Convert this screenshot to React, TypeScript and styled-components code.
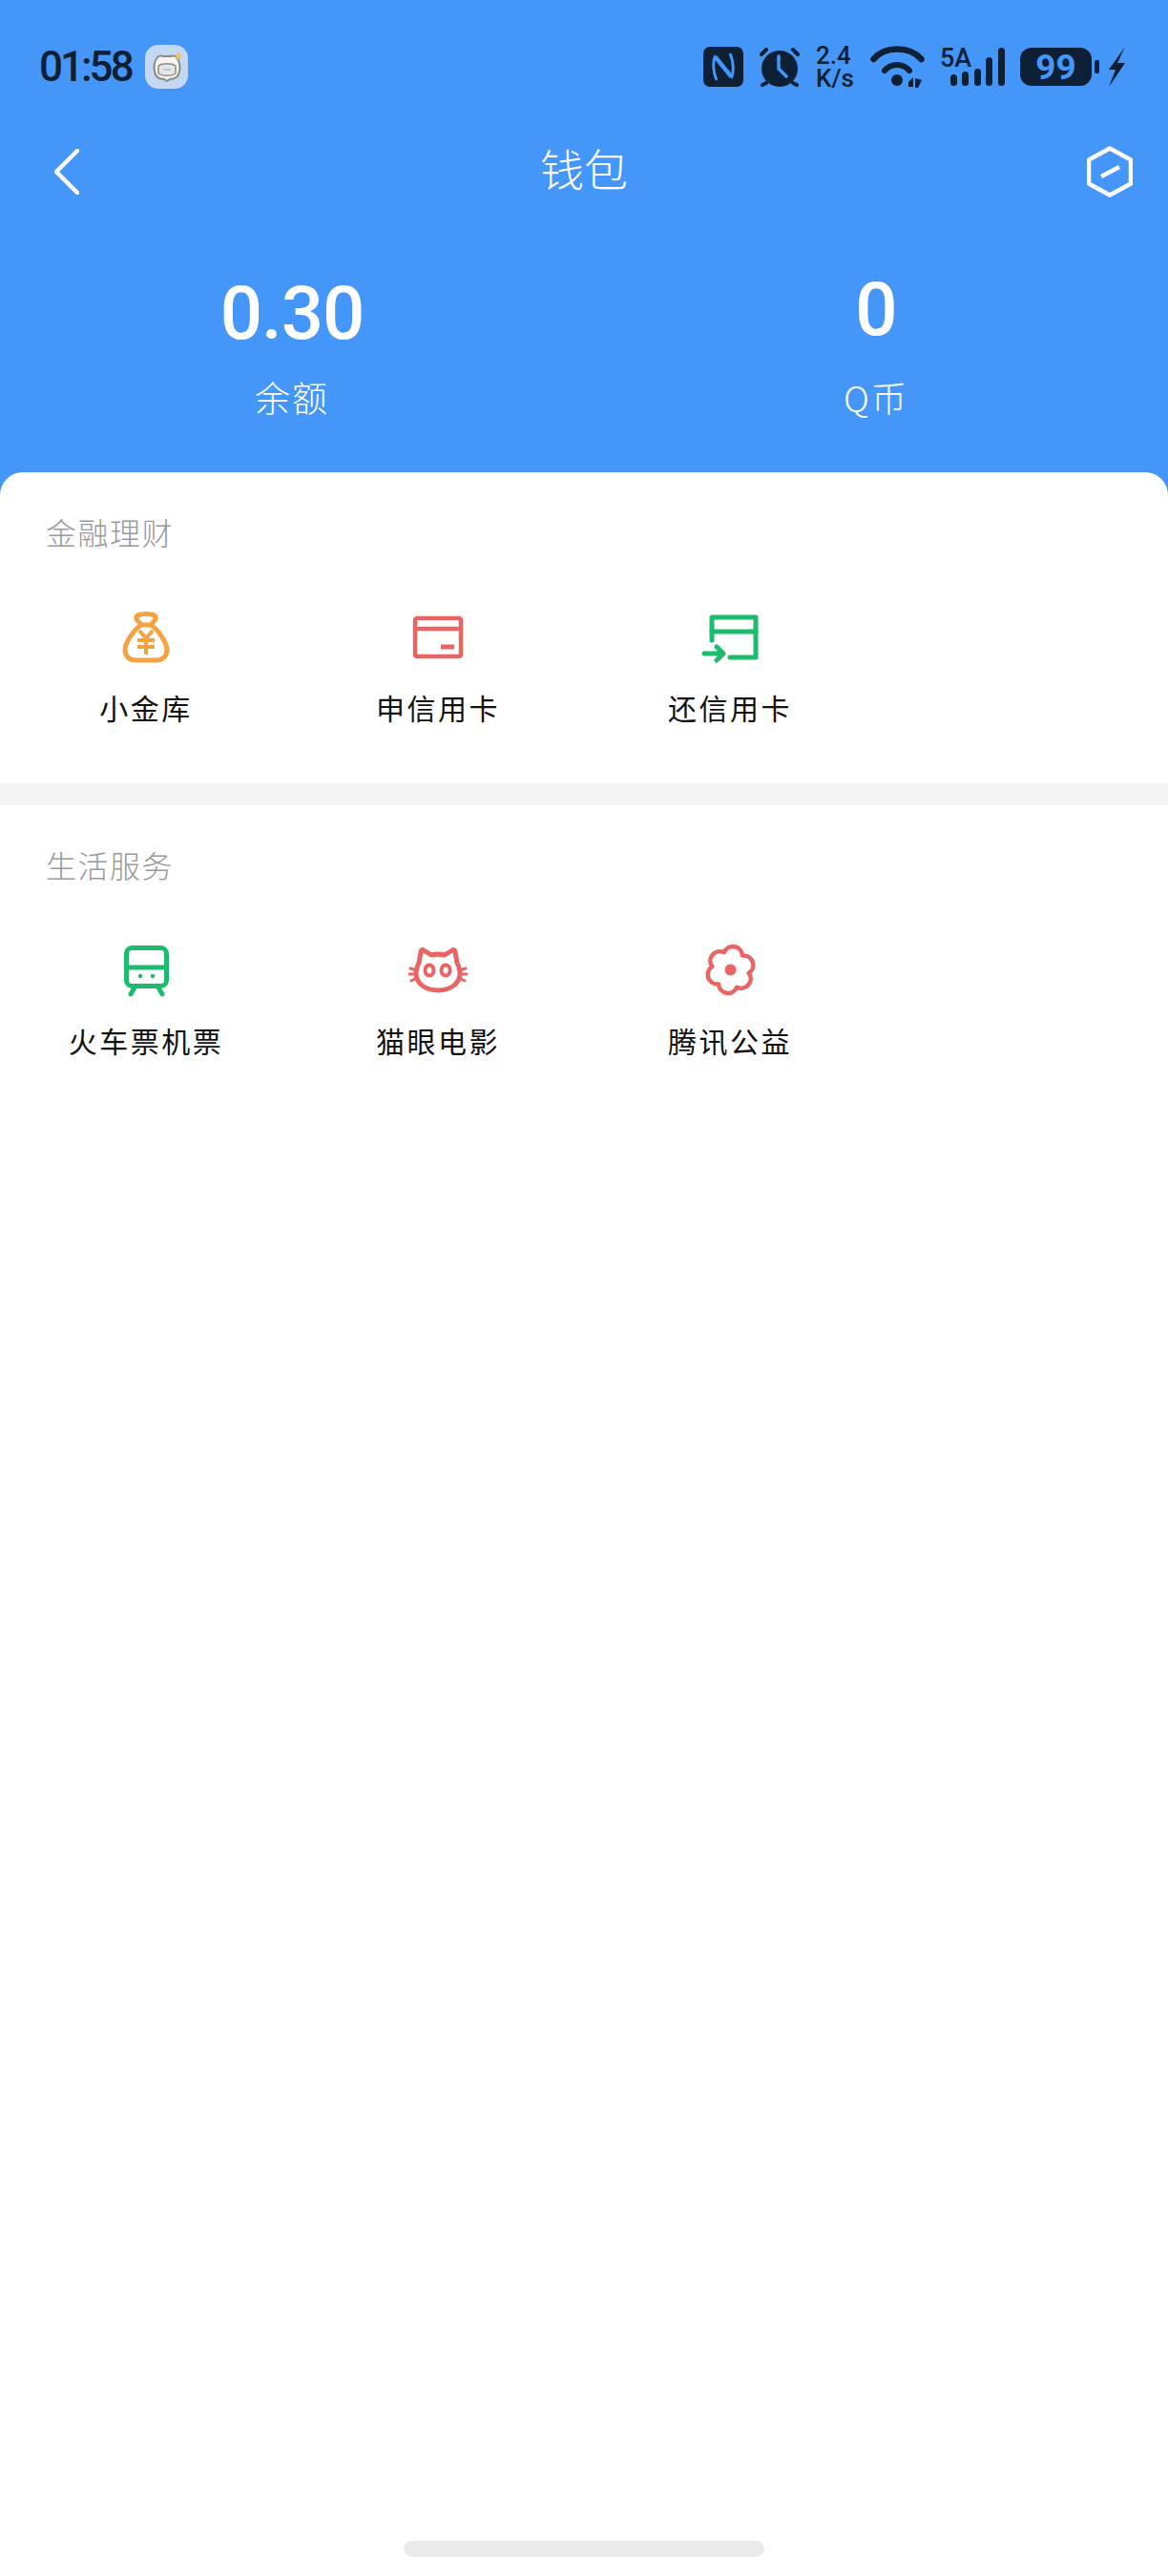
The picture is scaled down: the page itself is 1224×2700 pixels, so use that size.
import React from "react";
import styled, { createGlobalStyle } from "styled-components";

const GlobalStyle = createGlobalStyle`
  html, body {
    margin: 0;
    padding: 0;
    background: #ffffff;
    font-family: "Noto Sans CJK SC", "Noto Sans", sans-serif;
  }
`;

const DARK = "#0d2035";
const BLUE = "#4497f8";
const ORANGE = "#f4a13f";
const RED = "#e96565";
const GREEN = "#1dbb6d";

const Page = styled.div`
  position: relative;
  width: 1224px;
  height: 2700px;
  overflow: hidden;
  background: #ffffff;
`;

const BlueArea = styled.div`
  background: ${BLUE};
`;

const StatusBar = styled.div`
  display: flex;
  justify-content: space-between;
  align-items: center;
  height: 140px;
  padding: 0 44px 0 41px;
  box-sizing: border-box;
`;

const StatusLeft = styled.div`
  display: flex;
  align-items: center;
  gap: 15px;
`;

const Time = styled.div`
  width: 96px;
  font-family: Roboto, sans-serif;
  font-size: 44px;
  font-weight: 500;
  line-height: 46px;
  letter-spacing: -3px;
  white-space: nowrap;
  color: ${DARK};
`;

const Avatar = styled.div`
  display: flex;
  justify-content: center;
  align-items: center;
  width: 45px;
  height: 46px;
  border-radius: 14px;
  background: #c3d8f3;
`;

const StatusRight = styled.div`
  display: flex;
  align-items: center;
  gap: 16px;
`;

const NetSpeed = styled.div`
  width: 41px;
  font-family: Roboto, sans-serif;
  font-size: 26px;
  font-weight: 500;
  line-height: 24px;
  color: ${DARK};
`;

const NetSpeedLine = styled.div`
  white-space: nowrap;
`;

const Signal = styled.div`
  display: flex;
  align-items: flex-start;
  width: 68px;
`;

const SignalText = styled.div`
  width: 36px;
  font-family: Roboto, sans-serif;
  font-size: 27px;
  font-weight: 500;
  line-height: 24px;
  color: ${DARK};
`;

const SignalBars = styled.svg`
  display: block;
  margin-left: -25px;
`;

const Battery = styled.div`
  display: flex;
  align-items: center;
`;

const BatteryBody = styled.div`
  display: flex;
  justify-content: center;
  align-items: center;
  width: 75px;
  height: 40px;
  border-radius: 12px;
  background: ${DARK};
  font-family: Roboto, sans-serif;
  font-size: 37px;
  font-weight: 700;
  color: ${BLUE};
`;

const BatteryNub = styled.div`
  width: 5px;
  height: 14px;
  margin: 0 9px 0 3px;
  border-radius: 2px;
  background: ${DARK};
`;

const NavBar = styled.div`
  display: grid;
  grid-template-columns: 1fr auto 1fr;
  align-items: center;
  height: 80px;
  padding: 0 37px;
`;

const BackButton = styled.div`
  display: flex;
  padding-left: 20px;
`;

const NavTitle = styled.div`
  margin-top: -11px;
  font-size: 46px;
  font-weight: 300;
  line-height: 60px;
  letter-spacing: 0;
  color: #ffffff;
`;

const NavRight = styled.div`
  display: flex;
  justify-content: flex-end;
`;

const Stats = styled.div`
  display: grid;
  grid-template-columns: 1fr 1fr;
  height: 275px;
`;

const Stat = styled.div<{ $top: number }>`
  display: flex;
  flex-direction: column;
  align-items: center;
  padding-top: ${(p) => p.$top}px;
  color: #ffffff;
`;

const StatValue = styled.div`
  font-family: Roboto, sans-serif;
  font-size: 78px;
  font-weight: 500;
  line-height: 80px;
  letter-spacing: -1px;
`;

const StatLabel = styled.div<{ $gap: number }>`
  margin-top: ${(p) => p.$gap}px;
  font-size: 37px;
  font-weight: 300;
  line-height: 44px;
  letter-spacing: 2px;
`;

const Section = styled.div<{ $rounded?: boolean }>`
  padding: 45px 0 62px;
  background: #ffffff;
  border-radius: ${(p) => (p.$rounded ? "24px 24px 0 0" : "0")};
`;

const SectionTitle = styled.div`
  padding-left: 48px;
  font-size: 32px;
  font-weight: 300;
  line-height: 34px;
  letter-spacing: 1.5px;
  color: #999999;
`;

const ItemGrid = styled.div`
  display: grid;
  grid-template-columns: repeat(4, 306px);
  margin-top: 62px;
`;

const Item = styled.div`
  display: flex;
  flex-direction: column;
  align-items: center;
`;

const ItemLabel = styled.div`
  margin-top: 23px;
  font-size: 30px;
  font-weight: 400;
  line-height: 36px;
  letter-spacing: 2.5px;
  color: #111111;
`;

const Divider = styled.div`
  height: 23px;
  background: #f4f4f4;
`;

const HomeBar = styled.div`
  position: absolute;
  left: 423px;
  bottom: 20px;
  width: 378px;
  height: 17px;
  border-radius: 9px;
  background: #eaeaea;
`;

const flowerPath = (() => {
  const notches = Array.from({ length: 6 }, (_, i) => {
    const a = ((i * 60 - 50) * Math.PI) / 180;
    return [32.5 + 19.5 * Math.cos(a), 31.5 + 19.5 * Math.sin(a)];
  });
  const start = `M${notches[0][0].toFixed(1)} ${notches[0][1].toFixed(1)}`;
  const arcs = notches
    .slice(1)
    .concat([notches[0]])
    .map((n) => `A10 10 0 0 1 ${n[0].toFixed(1)} ${n[1].toFixed(1)}`)
    .join(" ");
  return `${start} ${arcs} Z`;
})();

const BagIcon = () => (
  <svg width="64" height="64" viewBox="0 0 64 64" fill="none" stroke={ORANGE} strokeLinecap="round" strokeLinejoin="round">
    <path strokeWidth="5" d="M27 19 L22 13 C21 9 25 7.5 32 7.5 C39 7.5 43 9 42 13 L37 19" />
    <path strokeWidth="5" d="M27 19 C19 24 10 38 10 45 C10 52 15 56 21 56 H43 C49 56 54 52 54 45 C54 38 45 24 37 19 Z" />
    <path strokeWidth="4" strokeLinecap="butt" d="M25 25 L32 33 L39 25 M23 35 H41 M23 42 H41 M32 33 V50" />
  </svg>
);

const CardIcon = () => (
  <svg width="64" height="64" viewBox="0 0 64 64" fill="none" stroke={RED} strokeWidth="4.5">
    <rect x="8" y="12" width="48" height="40" rx="2" />
    <path d="M8 23 H56" />
    <path strokeWidth="5" d="M35 42 H49" />
  </svg>
);

const RepayIcon = () => (
  <svg width="64" height="64" viewBox="0 0 64 64" fill="none" stroke={GREEN} strokeWidth="5" strokeLinecap="round" strokeLinejoin="round">
    <path d="M13 35 V11 H59 V53 H32" />
    <path d="M13 26 H59" />
    <path d="M5 49 H25 M18 42 L25 49 L18 56" />
  </svg>
);

const TrainIcon = () => (
  <svg width="64" height="64" viewBox="0 0 64 64" fill="none" stroke={GREEN} strokeWidth="5" strokeLinecap="round">
    <rect x="11.5" y="8.5" width="42" height="40" rx="6" />
    <path d="M11.5 29 H53.5" />
    <path d="M20 50 L16 57 M45 50 L49 57" />
    <circle cx="26" cy="38" r="2.2" fill={GREEN} stroke="none" />
    <circle cx="39" cy="38" r="2.2" fill={GREEN} stroke="none" />
  </svg>
);

const CatIcon = () => (
  <svg width="64" height="64" viewBox="0 0 64 64" fill="none" stroke={RED} strokeWidth="5" strokeLinecap="round" strokeLinejoin="round">
    <path d="M17 11 L25 16 C29 15 35 15 39 16 L47 11 C49 10 50 11 50 13 L52 24 C54 28 55 31 55 35 C55 46 45 53 32 53 C19 53 9 46 9 35 C9 31 10 28 12 24 L14 13 C14 11 15 10 17 11 Z" />
    <ellipse cx="23" cy="32" rx="4.5" ry="5.5" strokeWidth="4" />
    <ellipse cx="40" cy="32" rx="4.5" ry="5.5" strokeWidth="4" />
    <path strokeWidth="3" d="M3 30 L10 32 M2 36 L9 36 M4 43 L10 40 M61 30 L54 32 M62 36 L55 36 M60 43 L54 40" />
  </svg>
);

const FlowerIcon = () => (
  <svg width="64" height="64" viewBox="0 0 64 64" fill="none" stroke={RED} strokeWidth="4.5" strokeLinejoin="round">
    <path d={flowerPath} />
    <circle cx="32.5" cy="31.5" r="6" fill={RED} stroke="none" />
  </svg>
);

const App = () => {
  return (
    <Page>
      <GlobalStyle />
      <BlueArea>
        <StatusBar>
          <StatusLeft>
            <Time>01:58</Time>
            <Avatar>
              <svg width="36" height="36" viewBox="0 0 36 36" fill="#f6f4f0" stroke="#8b8b86" strokeWidth="2" strokeLinejoin="round">
                <path d="M8 8 C10 5 13 7 15 7 H21 C23 7 26 5 28 8 C31 12 32 18 31 23 C30 29 25 31 21 31 L18 33 L15 31 C10 31 6 29 5 23 C4 18 5 12 8 8 Z" />
                <path d="M9 17 C13 14 23 14 27 17 V25 C23 28 13 28 9 25 Z" fill="#e6e6e2" strokeWidth="1.5" />
                <path d="M14 21 H22" stroke="#9cc0e0" strokeWidth="1.5" />
                <path d="M30 2 L31.5 5 L34.5 5.5 L32 7.5 L32.5 10.5 L30 9 L27.5 10.5 L28 7.5 L25.5 5.5 L28.5 5 Z" fill="#e9c46a" stroke="none" />
              </svg>
            </Avatar>
          </StatusLeft>
          <StatusRight>
            <svg width="42" height="42" viewBox="0 0 42 42" fill="none">
              <rect width="42" height="42" rx="7" fill={DARK} />
              <path stroke={BLUE} strokeWidth="3" d="M14 35 C10 26 10 16 12 11 L29 32" />
              <path stroke={BLUE} strokeWidth="3" d="M28 7 C32 16 32 26 30 31 L13 10" />
            </svg>
            <svg width="44" height="42" viewBox="0 0 44 42" fill="none">
              <circle cx="22" cy="23" r="19" fill={DARK} />
              <path stroke={DARK} strokeWidth="4" strokeLinecap="round" d="M3 8 L8 3 M41 8 L36 3 M8 38 L4 40 M36 38 L40 40" />
              <path stroke={BLUE} strokeWidth="3.5" strokeLinecap="round" strokeLinejoin="round" d="M21 10 V23 L29 31" />
            </svg>
            <NetSpeed>
              <NetSpeedLine>2.4</NetSpeedLine>
              <NetSpeedLine>K/s</NetSpeedLine>
            </NetSpeed>
            <svg width="57" height="44" viewBox="0 0 57 44" fill="none" stroke={DARK} strokeLinecap="round">
              <path strokeWidth="6.5" d="M3.5 14 C15 0 41 0 53.5 14" />
              <path strokeWidth="6" d="M15 26 C22 18 34 18 41 26" />
              <circle cx="28" cy="36" r="6" fill={DARK} stroke="none" />
              <path fill={DARK} stroke="none" d="M40 38 L45 33 V43 H40 Z M47 34 L54 36 L50 44 L47 44 Z" />
            </svg>
            <Signal>
              <SignalText>5A</SignalText>
              <SignalBars width="57" height="42" viewBox="0 0 57 42" fill={DARK}>
                <rect x="0" y="29" width="7" height="12" rx="3.5" />
                <rect x="12" y="26" width="7" height="15" rx="3.5" />
                <rect x="25" y="23" width="7" height="18" rx="3.5" />
                <rect x="37" y="11" width="7" height="30" rx="3.5" />
                <rect x="50" y="1" width="7" height="40" rx="3.5" />
              </SignalBars>
            </Signal>
            <Battery>
              <BatteryBody>99</BatteryBody>
              <BatteryNub />
              <svg width="19" height="42" viewBox="0 0 19 42" fill={DARK}>
                <path d="M18 0 L1 24 H8 L1 42 L18 17 H10 Z" />
              </svg>
            </Battery>
          </StatusRight>
        </StatusBar>
        <NavBar>
          <BackButton>
            <svg width="26" height="48" viewBox="0 0 26 48" fill="none" stroke="#ffffff" strokeWidth="4.5" strokeLinecap="round" strokeLinejoin="round">
              <path d="M24 2 L2 24 L24 46" />
            </svg>
          </BackButton>
          <NavTitle>钱包</NavTitle>
          <NavRight>
            <svg width="48" height="54" viewBox="0 0 48 54" fill="none" stroke="#ffffff" strokeWidth="4.5" strokeLinejoin="round">
              <path d="M24 2.5 L46 14.5 V39.5 L24 51.5 L2 39.5 V14.5 Z" />
              <path d="M15 32 L34 22" />
            </svg>
          </NavRight>
        </NavBar>
        <Stats>
          <Stat $top={69}>
            <StatValue>0.30</StatValue>
            <StatLabel $gap={25}>余额</StatLabel>
          </Stat>
          <Stat $top={65}>
            <StatValue>0</StatValue>
            <StatLabel $gap={29}>Q币</StatLabel>
          </Stat>
        </Stats>
        <Section $rounded>
          <SectionTitle>金融理财</SectionTitle>
          <ItemGrid>
            <Item>
              <BagIcon />
              <ItemLabel>小金库</ItemLabel>
            </Item>
            <Item>
              <CardIcon />
              <ItemLabel>申信用卡</ItemLabel>
            </Item>
            <Item>
              <RepayIcon />
              <ItemLabel>还信用卡</ItemLabel>
            </Item>
          </ItemGrid>
        </Section>
      </BlueArea>
      <Divider />
      <Section>
        <SectionTitle>生活服务</SectionTitle>
        <ItemGrid>
          <Item>
            <TrainIcon />
            <ItemLabel>火车票机票</ItemLabel>
          </Item>
          <Item>
            <CatIcon />
            <ItemLabel>猫眼电影</ItemLabel>
          </Item>
          <Item>
            <FlowerIcon />
            <ItemLabel>腾讯公益</ItemLabel>
          </Item>
        </ItemGrid>
      </Section>
      <HomeBar />
    </Page>
  );
};

export default App;
